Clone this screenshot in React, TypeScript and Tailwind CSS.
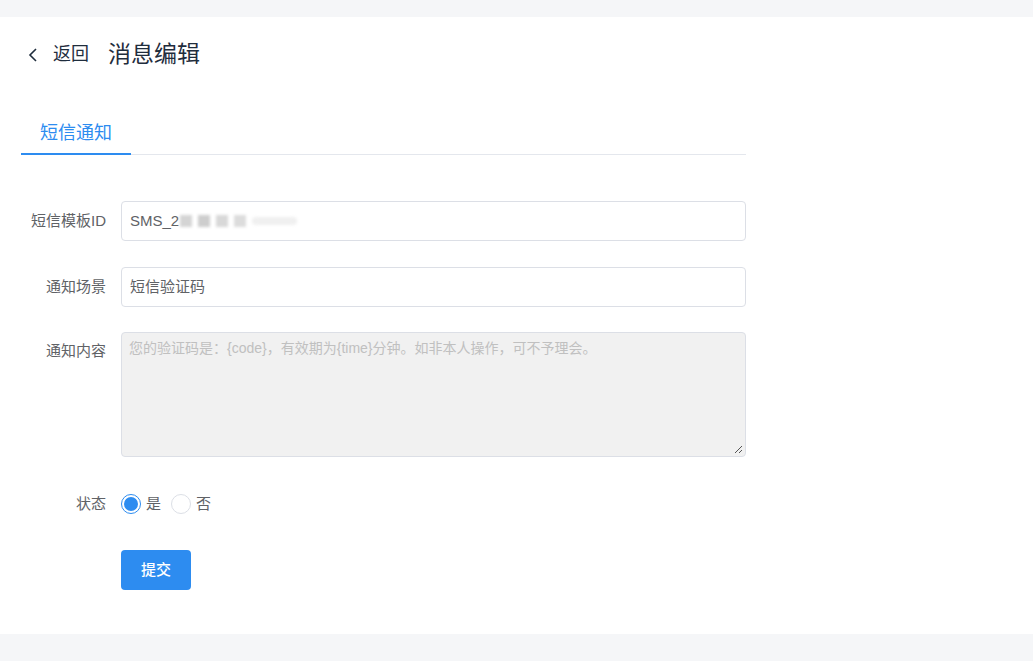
import React, { useState } from 'react'

const labelCls = 'w-[100px] shrink-0 pr-[15px] text-right text-[15px] text-[#606266]'

function FormRow({ label, children, className = '', top = false }: { label: string; children: React.ReactNode; className?: string; top?: boolean }) {
  return (
    <div className={'flex ' + (top ? 'items-start' : 'items-center') + ' ' + className}>
      <div className={labelCls + (top ? ' pt-[8px]' : '')}>{label}</div>
      <div className="flex-1">{children}</div>
    </div>
  )
}

function Radio({ checked, label, onClick }: { checked: boolean; label: string; onClick: () => void }) {
  return (
    <button type="button" onClick={onClick} className="flex items-center gap-[5px]">
      <span
        className={
          'flex h-[20px] w-[20px] items-center justify-center rounded-full border ' +
          (checked ? 'border-[#2d8cf0]' : 'border-[#dcdfe6]')
        }
      >
        {checked && <span className="h-[14px] w-[14px] rounded-full bg-[#2d8cf0]" />}
      </span>
      <span className="text-[15px] text-[#606266]">{label}</span>
    </button>
  )
}

export default function App() {
  const [enabled, setEnabled] = useState(true)

  return (
    <div className="min-h-[661px] bg-[#f5f6f8] font-['Liberation_Sans','Noto_Sans_CJK_SC',sans-serif]">
      <div className="h-[17px]" />
      <div className="h-[617px] bg-white">
        {/* header */}
        <div className="flex h-[75px] items-center pl-[27px]">
          <svg width="12" height="16" viewBox="0 0 12 16" fill="none" className="mr-[14px]">
            <path d="M9 2 L3 8 L9 14" stroke="#1f2d3d" strokeWidth="1.6" />
          </svg>
          <span className="text-[18px] text-[#1f2d3d]">返回</span>
          <span className="ml-[19px] text-[23px] text-[#1f2d3d]">消息编辑</span>
        </div>

        <div className="w-[746px] pl-[21px] pt-[21px]">
          {/* tabs */}
          <div className="flex border-b border-[#e4e7ed]">
            <div className="relative flex h-[41px] w-[110px] items-center justify-center text-[18px] text-[#2d8cf0]">
              短信通知
              <span className="absolute -bottom-px left-0 h-[2px] w-full bg-[#2d8cf0]" />
            </div>
          </div>

          {/* form */}
          <div className="pt-[46px]">
            <FormRow label="短信模板ID" className="mb-[26px]">
              <div className="flex h-[40px] items-center rounded-[4px] border border-[#dcdfe6] pl-[8px] text-[15px] text-[#606266]">
                SMS_2
                <span className="ml-[1px] flex items-center gap-[6px] blur-[1.5px]">
                  <span className="h-[12px] w-[12px] bg-[#d4d4d4]" />
                  <span className="h-[12px] w-[12px] bg-[#cdcdcd]" />
                  <span className="h-[12px] w-[12px] bg-[#d8d8d8]" />
                  <span className="h-[12px] w-[12px] bg-[#dcdcdc]" />
                  <span className="h-[8px] w-[45px] rounded-full bg-[#f0f0f0]" />
                </span>
              </div>
            </FormRow>

            <FormRow label="通知场景" className="mb-[25px]">
              <div className="flex h-[40px] items-center rounded-[4px] border border-[#dcdfe6] pl-[8px] text-[15px] text-[#606266]">
                短信验证码
              </div>
            </FormRow>

            <FormRow label="通知内容" className="mb-[27px]" top>
              <div className="relative h-[125px] rounded-[4px] border border-[#dcdfe6] bg-[#f1f1f1] px-[7px] py-[5px] text-[14px] leading-[21px] text-[#c0c0c0]">
                您的验证码是：{'{code}'}，有效期为{'{time}'}分钟。如非本人操作，可不予理会。
                <svg width="9" height="9" viewBox="0 0 9 9" className="absolute bottom-[2px] right-[2px]">
                  <path d="M8 1 L1 8 M8 5 L5 8" stroke="#555" strokeWidth="1" />
                </svg>
              </div>
            </FormRow>

            <FormRow label="状态" className="mb-[26px] h-[40px]">
              <div className="flex items-center gap-[10px]">
                <Radio checked={enabled} label="是" onClick={() => setEnabled(true)} />
                <Radio checked={!enabled} label="否" onClick={() => setEnabled(false)} />
              </div>
            </FormRow>

            <div className="pl-[100px]">
              <button className="h-[40px] w-[70px] rounded-[4px] bg-[#2d8cf0] text-[15px] font-medium text-white">
                提交
              </button>
            </div>
          </div>
        </div>
      </div>
    </div>
  )
}
